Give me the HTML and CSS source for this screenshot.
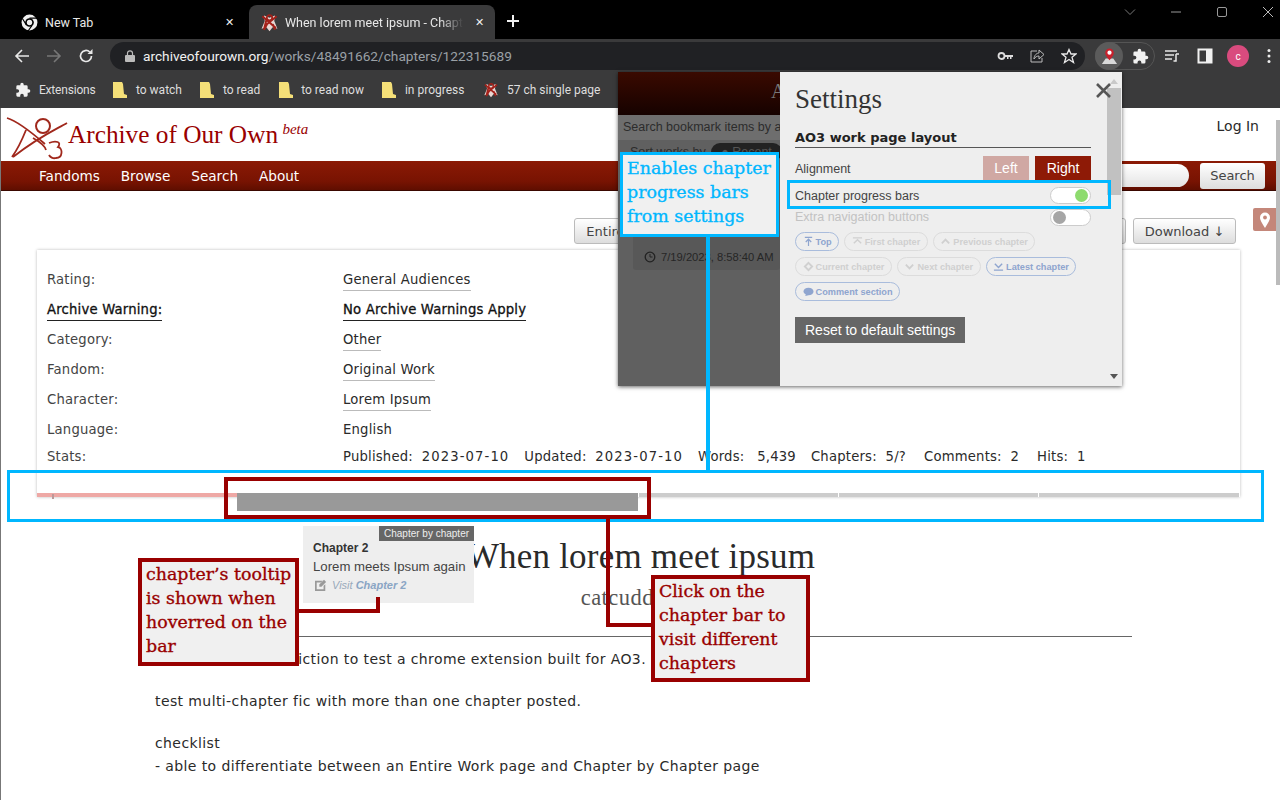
FILE: index.html

```html
<!DOCTYPE html>
<html lang="en">
<head>
    <meta charset="UTF-8">
    <title>When lorem meet ipsum</title>
    <link rel="stylesheet" href="styles.css">
</head>
<body>
    <svg class="sprites" width="0" height="0">
        <symbol id="ao3" viewBox="0 0 24 24">
            <path d="M5 3L12 6 19 3 18 10 22 20 16 18 12 23 8 18 2 20 6 10z" fill="#e9d6d2"/>
            <path d="M3 4L20 19M21 4L9 14 5 21 8 9M16 14L19 21" fill="none" stroke="#a3211a" stroke-width="2.600"/>
            <circle cx="12" cy="6" r="3.400" fill="none" stroke="#a3211a" stroke-width="2.200"/>
        </symbol>
        <symbol id="puzzle" viewBox="0 0 24 24">
            <path d="M20.500 11H19V7a2 2 0 0 0-2-2h-4V3.500a2.500 2.500 0 0 0-5 0V5H4a2 2 0 0 0-2 2v3.800h1.500a2.700 2.700 0 0 1 0 5.400H2V20a2 2 0 0 0 2 2h3.800v-1.500a2.700 2.700 0 0 1 5.400 0V22H17a2 2 0 0 0 2-2v-4h1.500a2.500 2.500 0 0 0 0-5z" fill="#f1f1f1"/>
        </symbol>
        <symbol id="folder" viewBox="0 0 14 17">
            <path d="M0 0H9L10 2 11 12 14 13V16H0z" fill="#f4df78"/>
        </symbol>
    </svg>

    <div class="tabstrip">
        <div class="tab">
            <svg class="tab-icon" viewBox="0 0 24 24"><circle cx="12" cy="12" r="10" fill="#f1f1f1"/><circle cx="12" cy="12" r="5.500" fill="#000"/><circle cx="12" cy="12" r="3.400" fill="#f1f1f1"/><path d="M12 6.500H22M8 15L3 7M15 16L10 23" stroke="#000" stroke-width="1.400"/></svg>
            <span class="tab-title">New Tab</span>
            <span class="tab-close">✕</span>
        </div>
        <div class="tab tab-active">
            <svg class="tab-icon"><use href="#ao3"/></svg>
            <span class="tab-title">When lorem meet ipsum - Chapter 2</span>
            <span class="tab-close">✕</span>
        </div>
        <svg class="new-tab" viewBox="0 0 14 14"><path d="M7 1V13M1 7H13" stroke="#f1f1f1" stroke-width="2"/></svg>
        <div class="window-controls">
            <svg viewBox="0 0 12 12"><path d="M1 3.500L6 8.500 11 3.500" fill="none" stroke="#777"/></svg>
            <svg viewBox="0 0 12 12"><path d="M1 6H11" stroke="#999"/></svg>
            <svg viewBox="0 0 12 12"><rect x="1.500" y="1.500" width="9" height="9" rx="1.500" fill="none" stroke="#999"/></svg>
            <svg viewBox="0 0 12 12"><path d="M1 1L11 11M11 1L1 11" stroke="#bbb"/></svg>
        </div>
    </div>

    <div class="toolbar">
        <svg class="nav-icon" viewBox="0 0 16 16"><path d="M15 8H2M8 2L2 8 8 14" fill="none" stroke="#e8e8e8" stroke-width="1.600"/></svg>
        <svg class="nav-icon" viewBox="0 0 16 16"><path d="M1 8H14M8 2L14 8 8 14" fill="none" stroke="#777" stroke-width="1.600"/></svg>
        <svg class="nav-icon" viewBox="0 0 16 16"><path d="M13.500 8A5.500 5.500 0 1 1 11.800 4" fill="none" stroke="#e8e8e8" stroke-width="1.700"/><path d="M14.500 1V6H9.500z" fill="#e8e8e8"/></svg>
        <div class="omnibox">
            <svg class="lock" viewBox="0 0 10 12"><path d="M2.500 5V3.300a2.500 2.500 0 0 1 5 0V5" fill="none" stroke="#bbb" stroke-width="1.200"/><rect y="5" width="10" height="7" rx="1" fill="#bbb"/></svg>
            <span class="url"><b>archiveofourown.org</b>/works/48491662/chapters/122315689</span>
            <div class="omni-icons">
                <svg viewBox="0 0 16 16"><circle cx="4.500" cy="8" r="3" fill="none" stroke="#ddd" stroke-width="1.800"/><path d="M7.500 7H16V9H14.500V11H13V9H11.500V11H10V9H7.500z" fill="#ddd"/></svg>
                <svg viewBox="0 0 16 16"><path d="M8 3H2V14H13V10" fill="none" stroke="#bbb"/><path d="M5 11C5 7 8 5 10 5V2L15 6.500 10 11V8C8 8 6 9 5 11z" fill="none" stroke="#bbb"/></svg>
                <svg viewBox="0 0 16 16"><path d="M8 1.500L10 6H15L11 9.300 12.500 14.500 8 11.500 3.500 14.500 5 9.300 1 6H6z" fill="none" stroke="#e8e8e8" stroke-width="1.300"/></svg>
            </div>
        </div>
        <div class="ext-group">
            <span class="ext-active">
                <svg viewBox="0 0 20 20"><path d="M6 12L2 18H18L14 12z" fill="#d9d9d9"/><path d="M10 14C7 10 5.500 8.500 5.500 6a4.500 4.500 0 0 1 9 0C14.500 8.500 13 10 10 14z" fill="#c9202c"/><circle cx="10" cy="6" r="2.200" fill="#fff"/></svg>
            </span>
            <svg class="ext-puzzle"><use href="#puzzle"/></svg>
        </div>
        <svg class="tool-icon" viewBox="0 0 16 16"><path d="M1 3H13M1 7H10M1 11H8" stroke="#e8e8e8" stroke-width="1.500"/><path d="M12 6V13H9.500M12 6H15" fill="none" stroke="#e8e8e8" stroke-width="1.500"/></svg>
        <svg class="tool-icon" viewBox="0 0 16 16"><rect x="1.500" y="1.500" width="13" height="13" fill="none" stroke="#f1f1f1" stroke-width="2"/><rect x="9" y="2" width="5" height="12" fill="#f1f1f1"/></svg>
        <span class="avatar">c</span>
        <svg class="dots" viewBox="0 0 4 16"><circle cx="2" cy="2.500" r="1.500" fill="#eee"/><circle cx="2" cy="8" r="1.500" fill="#eee"/><circle cx="2" cy="13.500" r="1.500" fill="#eee"/></svg>
    </div>

    <div class="bookmarks">
        <span class="bookmark first"><svg class="mark-icon"><use href="#puzzle"/></svg>Extensions</span>
        <span class="bookmark"><svg class="folder"><use href="#folder"/></svg>to watch</span>
        <span class="bookmark"><svg class="folder"><use href="#folder"/></svg>to read</span>
        <span class="bookmark"><svg class="folder"><use href="#folder"/></svg>to read now</span>
        <span class="bookmark"><svg class="folder"><use href="#folder"/></svg>in progress</span>
        <span class="bookmark"><svg class="mark-icon"><use href="#ao3"/></svg>57 ch single page</span>
    </div>

    <div class="page">
        <header class="site-head">
            <svg class="logo" viewBox="0 0 68 53">
                <path d="M7 10C17 13 30 23 45 36M67 15C55 22 40 28 13 49M26 22C22 32 17 42 12 49M33 30C40 34 45 38 46 42" fill="none" stroke="#a0281c" stroke-width="1.800"/>
                <circle cx="43" cy="18" r="7" fill="none" stroke="#a0281c" stroke-width="2"/>
                <path d="M49 35C56 32 62 34 58 39 63 40 63 50 56 50 53 51 50 49 49 47" fill="none" stroke="#a0281c" stroke-width="1.800"/>
            </svg>
            <span class="site-name">Archive of Our Own <sup class="beta">beta</sup></span>
            <span class="login">Log In</span>
        </header>
        <nav class="site-nav">
            <a>Fandoms</a>
            <a>Browse</a>
            <a>Search</a>
            <a>About</a>
            <span class="nav-search"></span>
            <span class="btn nav-btn">Search</span>
        </nav>

        <div class="work-nav">
            <span class="btn btn-entire">Entire Work</span>
            <span class="btn btn-hidden">Next Chapter →</span>
            <span class="btn btn-hidden">Chapter Index ↓</span>
            <span class="btn btn-hidden">Comments</span>
            <span class="btn btn-hidden">Share Work</span>
            <span class="btn btn-download">Download ↓</span>
            <span class="pin"><svg viewBox="0 0 12 16"><path d="M6 16C2.500 10 1 8 1 5.500a5 5 0 0 1 10 0C11 8 9.500 10 6 16z" fill="#fff"/><circle cx="6" cy="5.500" r="1.900" fill="#c4877a"/></svg></span>
        </div>

        <section class="meta">
            <div class="meta-grid">
                <span class="meta-label">Rating:</span><span><a class="tag">General Audiences</a></span>
                <span class="meta-label strong"><a class="tag tag-dark">Archive Warning:</a></span><span><a class="tag tag-dark strong">No Archive Warnings Apply</a></span>
                <span class="meta-label">Category:</span><span><a class="tag">Other</a></span>
                <span class="meta-label">Fandom:</span><span><a class="tag">Original Work</a></span>
                <span class="meta-label">Character:</span><span><a class="tag">Lorem Ipsum</a></span>
                <span class="meta-label">Language:</span><span>English</span>
                <span class="meta-label">Stats:</span>
                <span class="stats">
                    <span>Published:&nbsp; <span class="date">2023-07-10</span></span>
                    <span>Updated:&nbsp; <span class="date">2023-07-10</span></span>
                    <span>Words:&nbsp; <span class="words">5,439</span></span>
                    <span>Chapters:&nbsp; 5/?</span>
                    <span class="stat-wide">Comments:&nbsp; 2</span>
                    <span class="stat-wide">Hits:&nbsp; 1</span>
                </span>
            </div>
            <div class="chapter-bar">
                <span class="seg seg-read"><i class="tick"></i></span>
                <span class="seg seg-hover"></span>
                <span class="seg seg-rest"></span>
                <span class="seg seg-rest"></span>
                <span class="seg seg-rest"></span>
            </div>
        </section>

        <h2 class="work-title">When lorem meet ipsum</h2>
        <p class="work-author">catcuddlers1</p>
        <hr class="work-rule">
        <div class="work-text">
            <p>this is a tested fanfiction to test a chrome extension built for AO3.</p>
            <p>test multi-chapter fic with more than one chapter posted.</p>
            <p>checklist<br>- able to differentiate between an Entire Work page and Chapter by Chapter page</p>
        </div>
    </div>
    <div class="page-scroll"></div>

    <!-- extension popup -->
    <div class="popup">
        <div class="dim-panel">
            <div class="dim-head">A</div>
            <div class="dim-search">Search bookmark items by author</div>
            <div class="dim-sort">Sort works by <span class="dim-pill">● Recent</span></div>
            <div class="dim-card"><svg viewBox="0 0 12 12"><circle cx="6" cy="6" r="4.800" fill="none" stroke="#222" stroke-width="1.300"/><path d="M6 3V6H8.500" fill="none" stroke="#222"/></svg>7/19/2023, 8:58:40 AM</div>
        </div>
        <div class="settings">
            <h3 class="settings-title">Settings</h3>
            <h4 class="settings-sub">AO3 work page layout</h4>
            <div class="row row-align">
                <span class="align-label">Alignment</span>
                <span class="align-btns"><span class="align-btn align-left">Left</span><span class="align-btn align-right">Right</span></span>
            </div>
            <div class="row row-toggle">
                <span>Chapter progress bars</span>
                <span class="toggle toggle-on"><i></i></span>
            </div>
            <div class="row row-toggle row-off">
                <span>Extra navigation buttons</span>
                <span class="toggle toggle-off"><i></i></span>
            </div>
            <div class="chips">
                <span class="chip on"><svg viewBox="0 0 12 12"><path d="M2 1.500H10M6 11V3.500M3 6.500L6 3.500 9 6.500" fill="none" stroke="currentColor" stroke-width="1.300"/></svg>Top</span>
                <span class="chip"><svg viewBox="0 0 12 12"><path d="M1 2H11M2 8L6 4 10 8" fill="none" stroke="currentColor" stroke-width="1.500"/></svg>First chapter</span>
                <span class="chip"><svg viewBox="0 0 12 12"><path d="M2 8L6 4 10 8" fill="none" stroke="currentColor" stroke-width="2"/></svg>Previous chapter</span>
                <span class="chip"><svg viewBox="0 0 12 12"><path d="M6 2L10 6 6 10 2 6z" fill="none" stroke="currentColor" stroke-width="2"/></svg>Current chapter</span>
                <span class="chip"><svg viewBox="0 0 12 12"><path d="M2 4L6 8 10 4" fill="none" stroke="currentColor" stroke-width="2"/></svg>Next chapter</span>
                <span class="chip on"><svg viewBox="0 0 12 12"><path d="M1 10H11M2 3L6 7 10 3" fill="none" stroke="currentColor" stroke-width="1.500"/></svg>Latest chapter</span>
                <span class="chip on"><svg viewBox="0 0 12 12"><path d="M6 2C9 2 11.500 3.500 11.500 6S9 10 6 10L2.500 11 3 9C1.500 8.300.5 7.200.5 6 .5 3.500 3 2 6 2z" fill="currentColor"/></svg>Comment section</span>
            </div>
            <span class="reset">Reset to default settings</span>
            <div class="scrollbar"><i class="arrow-up"></i><i class="thumb"></i><i class="arrow-down"></i></div>
            <svg class="close" viewBox="0 0 15 15"><path d="M1 1L14 14M14 1L1 14" stroke="#555" stroke-width="2.600"/></svg>
        </div>
    </div>

    <!-- tooltip on the hovered chapter -->
    <div class="chapter-tip">
        <span class="tip-tag">Chapter by chapter</span>
        <b class="tip-title">Chapter 2</b>
        <span class="tip-text">Lorem meets Ipsum again</span>
        <span class="tip-link"><svg viewBox="0 0 14 14"><path d="M0 2H9L7 4H2V12H10V8L12 6V14H0z" fill="#999"/><path d="M5 9V6.500L10.500 1 13 3.500 7.500 9z" fill="#999"/></svg><em>Visit <b>Chapter 2</b></em></span>
    </div>

    <!-- annotations drawn over the screenshot -->
    <div class="mark blue-frame frame-bar"></div>
    <div class="mark blue-frame frame-toggle"></div>
    <div class="mark blue-line"></div>
    <div class="note note-blue">Enables chapter<br>progress bars<br>from settings</div>

    <div class="mark red-frame"></div>
    <div class="mark red-line line-a"></div>
    <div class="mark red-line line-b"></div>
    <div class="mark red-line line-c"></div>
    <div class="mark red-line line-d"></div>
    <div class="note note-red note-tip">chapter’s tooltip<br>is shown when<br>hoverred on the<br>bar</div>
    <div class="note note-red note-click">Click on the<br>chapter bar to<br>visit different<br>chapters</div>
</body>
</html>
```

FILE: styles.css

```css
* {
    box-sizing: border-box;
}

html, body {
    margin: 0;
    width: 1280px;
    height: 800px;
    overflow: hidden;
}

body {
    position: relative;
    background: #fff;
    font-family: "DejaVu Sans", sans-serif;
    color: #2a2a2a;
}

.sprites {
    position: absolute;
}

/* browser chrome */
.tabstrip {
    display: flex;
    align-items: flex-end;
    height: 39px;
    background: #000;
    font-family: Roboto, sans-serif;
    font-size: 12.500px;
    color: #e8e8e8;
}

.tab {
    display: flex;
    align-items: center;
    width: 245px;
    height: 34px;
    padding: 0 6px 0 20px;
    flex-shrink: 0;
}

.tab-active {
    width: 246px;
    margin-left: 4px;
    padding-left: 11px;
    background: #3a3a3b;
    border-radius: 8px 8px 0 0;
}

.tab-icon {
    width: 19px;
    height: 19px;
    flex-shrink: 0;
}

.tab-title {
    flex: 1;
    margin-left: 6px;
    white-space: nowrap;
    overflow: hidden;
}

.tab-active .tab-title {
    -webkit-mask-image: linear-gradient(to right, #000 84%, transparent 97%);
}

.tab-close {
    width: 20px;
    font-size: 11px;
    color: #f1f1f1;
    text-align: center;
}

.new-tab {
    width: 14px;
    height: 14px;
    margin: 0 0 11px 11px;
}

.window-controls {
    display: flex;
    gap: 34px;
    margin-left: auto;
    padding-right: 6px;
    align-self: flex-start;
    margin-top: 6px;
}

.window-controls svg {
    width: 12px;
    height: 12px;
}

.toolbar {
    display: flex;
    align-items: center;
    height: 33px;
    padding: 1px 0 0 14px;
    background: #3a3a3b;
}

.nav-icon {
    width: 16px;
    height: 16px;
    margin-right: 16px;
    flex-shrink: 0;
}

.omnibox {
    display: flex;
    align-items: center;
    width: 975px;
    height: 28px;
    padding: 0 8px 0 15px;
    background: #202124;
    border-radius: 14px;
    font-family: Roboto, sans-serif;
    font-size: 13.700px;
}

.lock {
    width: 10px;
    height: 12px;
    margin-right: 8px;
}

.url {
    color: #9aa0a6;
    white-space: nowrap;
}

.url b {
    font-weight: 400;
    color: #f1f1f1;
}

.omni-icons {
    display: flex;
    gap: 16px;
    margin-left: auto;
}

.omni-icons svg {
    width: 16px;
    height: 16px;
}

.ext-group {
    display: flex;
    align-items: center;
    width: 60px;
    height: 28px;
    margin-left: 10px;
    border: 1px solid #555;
    border-radius: 14px;
}

.ext-active {
    display: flex;
    align-items: center;
    justify-content: center;
    width: 28px;
    height: 28px;
    margin-left: -1px;
    background: #5b5b5b;
    border-radius: 50%;
}

.ext-active svg {
    width: 19px;
    height: 19px;
}

.ext-puzzle {
    width: 17px;
    height: 17px;
    margin-left: 9px;
}

.tool-icon {
    width: 16px;
    height: 16px;
    margin-left: 17px;
}

.ext-group + .tool-icon {
    margin-left: 9px;
}

.avatar {
    display: flex;
    align-items: center;
    justify-content: center;
    width: 22px;
    height: 22px;
    margin-left: 14px;
    background: #d94b7e;
    border-radius: 50%;
    font-family: Roboto, sans-serif;
    font-size: 10px;
    color: #fff;
}

.dots {
    width: 4px;
    height: 16px;
    margin-left: 18px;
}

.bookmarks {
    display: flex;
    align-items: center;
    height: 36px;
    padding-left: 15px;
    background: #3a3a3b;
    font-family: Roboto, sans-serif;
    font-size: 12px;
    color: #dedede;
}

.bookmark {
    display: flex;
    align-items: center;
    margin-right: 18.500px;
    white-space: nowrap;
}

.bookmark.first {
    margin-right: 18px;
    letter-spacing: -0.2px;
}

.folder {
    width: 14px;
    height: 17px;
    margin-right: 8.500px;
}

.mark-icon {
    width: 16px;
    height: 16px;
    margin-right: 8px;
}

/* AO3 page */
.page {
    min-height: 692px;
    border-left: 1px solid #777;
    font-size: 14px;
    letter-spacing: 0.4px;
}

.page-scroll {
    position: absolute;
    right: 0;
    top: 120px;
    width: 4px;
    height: 165px;
    background: #bbb;
}

.site-head {
    display: flex;
    height: 53px;
    padding-right: 21px;
}

.logo {
    width: 68px;
    height: 53px;
    margin-left: -1px;
    flex-shrink: 0;
}

.site-name {
    align-self: center;
    font-family: "Liberation Serif", serif;
    font-size: 25.300px;
    color: #900;
    white-space: nowrap;
    letter-spacing: 0;
}

.beta {
    font-size: 15px;
    font-style: italic;
    line-height: 0;
    vertical-align: 9px;
    margin-left: -2px;
}

.login {
    margin-left: auto;
    padding-top: 10px;
    font-size: 14px;
    letter-spacing: 0;
    color: #2a2a2a;
}

.site-nav {
    display: flex;
    align-items: center;
    height: 30px;
    padding: 0 15px 0 38px;
    background: linear-gradient(#8b1a05, #781302 70%, #5f0e00);
    border-bottom: 1px solid #3a0800;
    color: #fff;
    font-size: 13.600px;
    letter-spacing: 0;
}

.site-nav a {
    margin-right: 21px;
}

.nav-search {
    width: 120px;
    height: 23px;
    margin-left: auto;
    margin-right: 11px;
    background: linear-gradient(#fff, #e4e4e4);
    border-radius: 12px;
}

.btn {
    display: inline-flex;
    align-items: center;
    justify-content: center;
    height: 26px;
    padding: 0 11px;
    background: linear-gradient(#fff, #ddd);
    border: 1px solid #bbb;
    border-radius: 3px;
    color: #444;
    font-size: 13px;
    letter-spacing: 0;
    white-space: nowrap;
}

.nav-btn {
    width: 65px;
    padding: 0;
    border: 0;
}

.work-nav {
    display: flex;
    justify-content: flex-end;
    gap: 7px;
    align-items: center;
    padding: 21px 4px 0 0;
    height: 59px;
}

.btn-download {
    width: 103px;
    padding: 0;
}

.btn-entire {
    width: 100px;
}

.btn-hidden {
    width: 106px;
    overflow: hidden;
}

.pin {
    display: flex;
    align-items: center;
    justify-content: center;
    width: 23px;
    height: 23px;
    margin-left: 10px;
    margin-top: -23px;
    background: #c4877a;
    border-radius: 2px 0 0 2px;
}

.pin svg {
    width: 12px;
    height: 16px;
}

.meta {
    position: relative;
    width: 1203px;
    height: 247px;
    margin-left: 36px;
    background: #fff;
    box-shadow: 0 0 3px #bbb;
    font-size: 13.200px;
    letter-spacing: 0.2px;
}

.meta-grid {
    display: grid;
    grid-template-columns: 296px 1fr;
    grid-template-rows: repeat(6, 30px) 24px;
    padding: 14px 0 0 10px;
    align-items: center;
}

.meta-label {
    color: #444;
}

.strong {
    font-weight: 400;
    color: #111;
    -webkit-text-stroke: 0.3px #111;
}

.tag {
    padding-bottom: 3px;
    border-bottom: 1px solid #bbb;
}

.tag-dark {
    border-bottom: 1px solid #222;
}

.stats {
    display: flex;
    gap: 15px;
    white-space: nowrap;
}

.date {
    letter-spacing: 1.100px;
}

.words {
    margin-left: 4px;
}

.stat-wide {
    margin-left: 3px;
}

.chapter-bar {
    position: absolute;
    left: 0;
    right: 0;
    bottom: 0;
    display: flex;
    height: 4px;
    align-items: flex-start;
}

.seg {
    position: relative;
    height: 4px;
    flex-shrink: 0;
}

.seg-read {
    width: 200px;
    background: #eea8a5;
}

.tick {
    position: absolute;
    left: 15px;
    top: 1px;
    width: 2px;
    height: 5px;
    background: #b99;
}

.seg-hover {
    width: 401px;
    height: 18px;
    background: #999;
}

.seg-rest {
    width: 199px;
    margin-left: 1px;
    background: #ccc;
}

.seg-rest:last-child {
    width: 200px;
}

.work-title {
    margin: 40px 0 0;
    text-align: center;
    font-family: "Liberation Serif", serif;
    font-size: 35px;
    line-height: 40px;
    font-weight: 400;
    letter-spacing: 0.2px;
    color: #2a2a2a;
}

.work-author {
    margin: 9px 0 0;
    text-align: center;
    font-family: "Liberation Serif", serif;
    font-size: 22.500px;
    line-height: 24px;
    color: #555;
    letter-spacing: 0.5px;
}

.work-rule {
    width: 976px;
    margin: 26px 0 0 155px;
    border: 0;
    border-top: 1px solid #666;
}

.work-text {
    padding: 11px 0 0 154px;
}

.work-text p {
    margin: 0 0 19px;
    line-height: 23px;
}

/* extension popup */
.popup {
    position: absolute;
    left: 618px;
    top: 72px;
    display: flex;
    width: 504px;
    height: 314px;
    box-shadow: 0 1px 4px rgba(0, 0, 0, 0.6);
}

.dim-panel {
    width: 162px;
    background: #606060;
    overflow: hidden;
    white-space: nowrap;
    font-family: "Liberation Sans", sans-serif;
    color: #2c2c2c;
}

.dim-head {
    height: 43px;
    padding: 8px 0 0 153px;
    background: linear-gradient(#3a0a00, #160200);
    font-family: "Liberation Serif", serif;
    font-size: 20px;
    color: #777;
}

.dim-search {
    height: 25px;
    padding: 5px;
    background: #6e6e6e;
    font-size: 12.500px;
}

.dim-sort {
    height: 20px;
    padding: 5px 12px;
    font-size: 12.500px;
}

.dim-pill {
    margin-left: 2px;
    padding: 2px 10px;
    background: #222;
    border-radius: 10px;
    color: #555;
}

.dim-card {
    display: flex;
    align-items: center;
    gap: 5px;
    margin: 75px 0 0 15px;
    height: 35px;
    padding: 8px 11px 0;
    background: #585858;
    border-radius: 3px;
    font-size: 11.200px;
    color: #262626;
}

.dim-card svg {
    width: 12px;
    height: 12px;
    flex-shrink: 0;
}

.settings {
    position: relative;
    flex: 1;
    padding: 0 31px 0 15px;
    background: #eee;
    font-family: "Liberation Sans", sans-serif;
    font-size: 12.500px;
    color: #444;
}

.settings-title {
    margin: 12px 0 0;
    font-family: "Liberation Serif", serif;
    font-size: 27px;
    line-height: 30px;
    font-weight: 400;
    color: #333;
}

.settings-sub {
    margin: 16px 0 0;
    padding-bottom: 1px;
    border-bottom: 1px solid #555;
    font-family: "DejaVu Sans", sans-serif;
    font-size: 13px;
    line-height: 16px;
    color: #222;
}

.row {
    display: flex;
    align-items: center;
    justify-content: space-between;
}

.row-align {
    height: 24px;
    margin-top: 8px;
}

.align-label {
    padding-top: 2px;
}

.align-btns {
    display: flex;
    gap: 6px;
}

.align-btn {
    display: flex;
    align-items: center;
    justify-content: center;
    height: 24px;
    font-size: 14px;
    color: #fff;
}

.align-left {
    width: 46px;
    background: #d0a8a3;
}

.align-right {
    width: 56px;
    background: #8e1a06;
}

.row-toggle {
    height: 23px;
}

.row-align + .row-toggle {
    margin-top: 4px;
}

.row-off {
    height: 22px;
    margin-top: -1px;
    color: #c2c2c2;
}

.toggle {
    display: flex;
    align-items: center;
    width: 41px;
    height: 17px;
    padding: 0 2px;
    background: #fff;
    border: 1px solid #ccc;
    border-radius: 9px;
}

.toggle i {
    width: 13px;
    height: 13px;
    border-radius: 50%;
}

.toggle-on {
    justify-content: flex-end;
}

.toggle-on i {
    background: #8ddb6e;
}

.toggle-off i {
    background: #a6a6a6;
}

.chips {
    display: flex;
    flex-wrap: wrap;
    gap: 6px 5px;
    margin-top: 4px;
    width: 296px;
}

.chip {
    display: flex;
    align-items: center;
    gap: 2px;
    height: 19px;
    padding: 0 6.500px;
    border: 1px solid #dcdcdc;
    border-radius: 10px;
    font-size: 9.200px;
    font-weight: 700;
    color: #d0d0d0;
    white-space: nowrap;
}

.chip svg {
    width: 11px;
    height: 11px;
}

.chip.on {
    border-color: #a9bcdc;
    color: #8fa5cf;
}

.reset {
    display: inline-block;
    margin-top: 16px;
    padding: 0 10px;
    height: 26px;
    line-height: 26px;
    background: #666;
    color: #fff;
    font-size: 14px;
}

.close {
    position: absolute;
    left: 316px;
    top: 11px;
    width: 15px;
    height: 15px;
}

.scrollbar {
    position: absolute;
    right: 1px;
    top: 0;
    display: flex;
    flex-direction: column;
    align-items: center;
    width: 14px;
    height: 100%;
}

.thumb {
    width: 14px;
    height: 107px;
    margin-top: 4px;
    background: #c1c1c1;
}

.arrow-up, .arrow-down {
    width: 0;
    height: 0;
    border-left: 4px solid transparent;
    border-right: 4px solid transparent;
}

.arrow-up {
    margin-top: 7px;
    border-bottom: 5px solid #c9c9c9;
}

.arrow-down {
    margin-top: auto;
    margin-bottom: 7px;
    border-top: 5px solid #555;
}

/* chapter tooltip */
.chapter-tip {
    position: absolute;
    left: 303px;
    top: 526px;
    display: flex;
    flex-direction: column;
    width: 171px;
    height: 77px;
    padding: 15px 0 0 10px;
    background: #eee;
    font-family: "Liberation Sans", sans-serif;
    color: #444;
}

.tip-tag {
    position: absolute;
    right: 0;
    top: 0;
    width: 95px;
    height: 15px;
    background: #666;
    color: #eee;
    font-size: 10px;
    line-height: 15px;
    text-align: center;
}

.tip-title {
    font-size: 12px;
    line-height: 14px;
    color: #333;
}

.tip-text {
    margin-top: 3px;
    font-size: 13.200px;
    line-height: 17px;
    white-space: nowrap;
}

.tip-link {
    display: flex;
    align-items: center;
    gap: 5px;
    margin-top: 4px;
    padding-left: 2px;
    font-size: 11px;
    color: #9ab;
}

.tip-link svg {
    width: 12px;
    height: 12px;
}

.tip-link b {
    color: #8aa5c4;
}

/* annotations */
.mark {
    position: absolute;
}

.blue-frame {
    border: 3px solid #00b7ff;
}

.frame-bar {
    left: 7px;
    top: 470px;
    width: 1257px;
    height: 52px;
}

.frame-toggle {
    left: 787px;
    top: 180px;
    width: 324px;
    height: 29px;
}

.blue-line {
    left: 706px;
    top: 236px;
    width: 4px;
    height: 235px;
    background: #00b7ff;
}

.note {
    position: absolute;
    background: #f0f0f0;
    font-family: "DejaVu Serif", serif;
    font-size: 17.400px;
    line-height: 24px;
    white-space: nowrap;
    -webkit-text-stroke: 0.35px currentColor;
}

.note-blue {
    left: 620px;
    top: 152px;
    width: 159px;
    height: 85px;
    padding: 1px 4px 0;
    border: 3px solid #00b7ff;
    color: #00b7ff;
}

.note-red {
    padding: 0 4px;
    border: 4px solid #990000;
    color: #990000;
}

.note-tip {
    left: 138px;
    top: 558px;
    width: 161px;
    height: 108px;
}

.note-click {
    left: 651px;
    top: 575px;
    width: 159px;
    height: 107px;
}

.red-frame {
    left: 224px;
    top: 477px;
    width: 427px;
    height: 42px;
    border: 4px solid #990000;
}

.red-line {
    background: #990000;
}

.line-a {
    left: 376px;
    top: 597px;
    width: 4px;
    height: 16px;
}

.line-b {
    left: 299px;
    top: 609px;
    width: 81px;
    height: 4px;
}

.line-c {
    left: 606px;
    top: 518px;
    width: 4px;
    height: 109px;
}

.line-d {
    left: 606px;
    top: 623px;
    width: 45px;
    height: 4px;
}
```
